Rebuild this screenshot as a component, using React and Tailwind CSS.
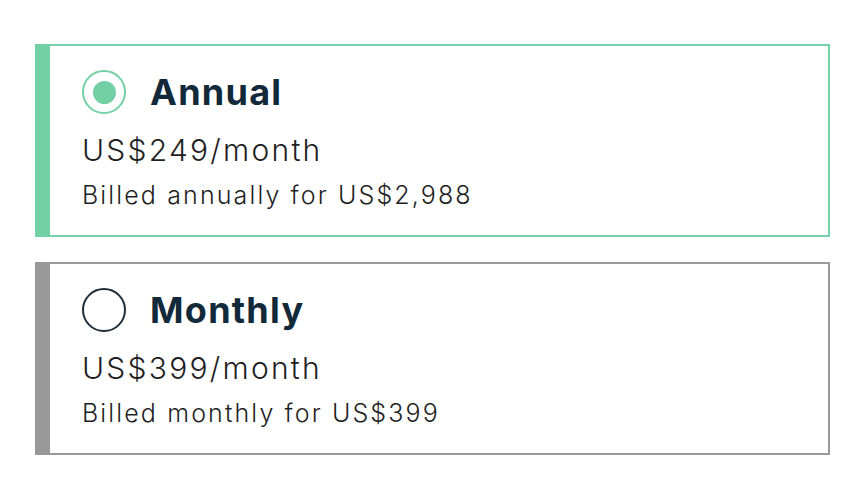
import React, { useState } from 'react';

const plans = [
  { id: 'annual', name: 'Annual', price: 'US$249/month', note: 'Billed annually for US$2,988' },
  { id: 'monthly', name: 'Monthly', price: 'US$399/month', note: 'Billed monthly for US$399' },
];

const PlanCard = ({ plan, selected, onSelect }) => (
  <button
    onClick={() => onSelect(plan.id)}
    className={`flex w-[795px] h-[193px] text-left border-2 ${
      selected ? 'border-[#77d1ad]' : 'border-[#9a9a9a]'
    }`}
  >
    {/* Side bar */}
    <div className={`w-[15px] -ml-[2px] -my-[2px] shrink-0 ${selected ? 'bg-[#72d0a4]' : 'bg-[#999999]'}`}></div>

    <div className="flex flex-col pl-[32px] pt-[24px]">
      <div className="flex items-center gap-[24px] h-[44px]">
        <span
          className={`flex items-center justify-center w-[44px] h-[44px] rounded-full border-2 ${
            selected ? 'border-[#72d0a4]' : 'border-[#1d2d3a]'
          }`}
        >
          {selected && <span className="w-[23px] h-[23px] rounded-full bg-[#72d0a4]"></span>}
        </span>
        <span className="text-[36px] font-bold text-[#12293a] leading-none tracking-[0.035em]">{plan.name}</span>
      </div>
      <div className="mt-[18px] text-[30px] font-light text-[#1f1f1f] leading-[36px] tracking-[0.075em]">{plan.price}</div>
      <div className="mt-[12px] text-[25px] font-light text-[#1f1f1f] leading-[30px] tracking-[0.085em]">{plan.note}</div>
    </div>
  </button>
);

const App = () => {
  const [selected, setSelected] = useState('annual');

  return (
    <div
      className="w-[862px] h-[498px] bg-white pl-[35px] pt-[44px] flex flex-col gap-[25px]"
      style={{ fontFamily: 'Inter, "Noto Sans", sans-serif' }}
    >
      {plans.map((p) => (
        <PlanCard key={p.id} plan={p} selected={selected === p.id} onSelect={setSelected} />
      ))}
    </div>
  );
};

export default App;
